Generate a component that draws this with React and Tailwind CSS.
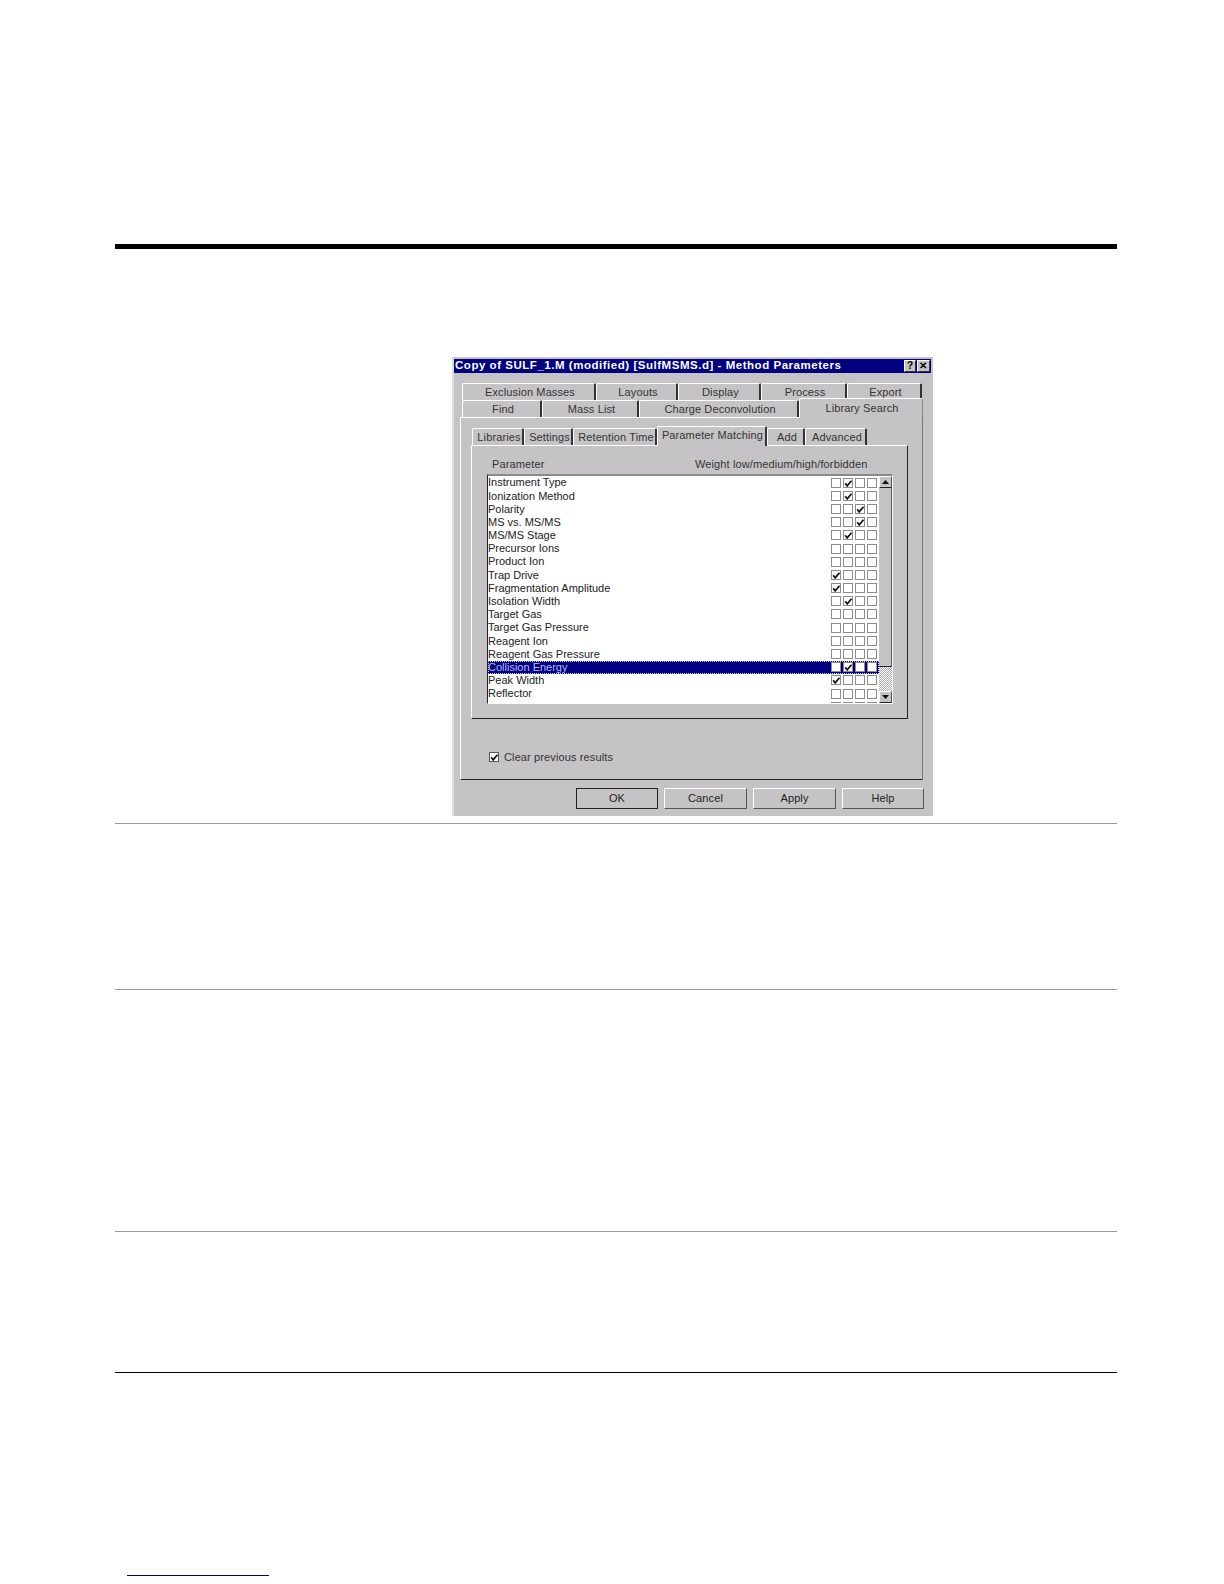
import React from 'react';

const backTabs = [
  ['Exclusion Masses', 'w-[134px]'],
  ['Layouts', 'w-[82px]'],
  ['Display', 'w-[83px]'],
  ['Process', 'w-[86px]'],
  ['Export', 'w-[75px]'],
];

const frontTabs = [
  ['Find', 'w-[80px]'],
  ['Mass List', 'w-[97px]'],
  ['Charge Deconvolution', 'w-[160px]'],
];

const innerTabs = [
  ['Libraries', 'w-[52px]'],
  ['Settings', 'w-[49px]'],
  ['Retention Time', 'w-[84px]'],
];

// checked = column with a tick, 0 means none
const params = [
  ['Instrument Type', 2],
  ['Ionization Method', 2],
  ['Polarity', 3],
  ['MS vs. MS/MS', 3],
  ['MS/MS Stage', 2],
  ['Precursor Ions', 0],
  ['Product Ion', 0],
  ['Trap Drive', 1],
  ['Fragmentation Amplitude', 1],
  ['Isolation Width', 2],
  ['Target Gas', 0],
  ['Target Gas Pressure', 0],
  ['Reagent Ion', 0],
  ['Reagent Gas Pressure', 0],
  ['Collision Energy', 2, true],
  ['Peak Width', 1],
  ['Reflector', 0],
  ['Dry Source Temp', 0],
];

const Tick = () => (
  <svg viewBox="0 0 9 9" className="w-[9px] h-[9px] block">
    <path d="M1.2 4.2 L3.2 6.8 L7.5 1.8" fill="none" stroke="#111" strokeWidth="1.7" />
  </svg>
);

const Box = ({ checked, className = '' }) => (
  <div className={`w-[10px] h-[10px] bg-white border border-[#8c8c8c] shrink-0 ${className}`}>
    {checked && <Tick />}
  </div>
);

const Row = ({ label, col, selected }) => (
  <div className={`flex items-center h-[13.2px] shrink-0 ${selected ? 'bg-[#000080] outline-1 outline-dotted outline-[#d0d0d0] -outline-offset-1' : ''}`}>
    <span className={`flex-1 whitespace-nowrap tracking-normal ${selected ? 'text-[#b9b9ff]' : 'text-[#222]'}`}>{label}</span>
    <div className="flex gap-[2.1px] pr-[2px]">
      {[1, 2, 3, 4].map((n) => (
        <Box key={n} checked={col === n} />
      ))}
    </div>
  </div>
);

const Tab = ({ label, width }) => (
  <div className={`${width} h-[17px] pl-[3px] pt-[1px] flex items-center justify-center bg-[#c6c3c6] border-t border-l border-t-white border-l-white border-r-2 border-r-[#333] rounded-t-[2px] whitespace-nowrap`}>
    {label}
  </div>
);

const Btn = ({ label, isDefault, className = '' }) => (
  <button className={`h-[21px] pb-[1px] text-[11px] text-[#222] bg-[#c6c3c6] border ${isDefault ? 'border-[#222]' : 'border-t-white border-l-white border-r-[#555] border-b-[#555]'} ${className}`}>
    {label}
  </button>
);

const ArrowBtn = ({ up }) => (
  <div className="h-[12px] shrink-0 flex items-center justify-center bg-[#c6c3c6] border border-t-white border-l-white border-r-[#555] border-b-[#222]">
    <svg viewBox="0 0 7 4" className="w-[7px] h-[4px]">
      <path d={up ? 'M3.5 0 L7 4 L0 4 Z' : 'M0 0 L7 0 L3.5 4 Z'} fill="#111" />
    </svg>
  </div>
);

const Dialog = () => (
  <div className="w-[481px] h-[459px] ml-[337px] mt-[108px] bg-[#c6c3c6] border-l-2 border-l-[#dcdcdc] pt-[2px] pr-[2px] text-[11px] text-[#333] font-['Liberation_Sans',Arial,sans-serif] tracking-[0.12px]">
    <div className="h-[14px] bg-[#000080] flex items-center justify-between pl-[1px] pr-[1px]">
      <span className="text-white text-[11.5px] font-bold tracking-[0.53px] whitespace-nowrap">
        Copy of SULF_1.M (modified) [SulfMSMS.d] - Method Parameters
      </span>
      <div className="flex gap-[1px]">
        <div className="w-[12px] h-[12px] bg-[#c6c3c6] border border-t-white border-l-white border-r-[#333] border-b-[#333] text-[10px] leading-[10px] font-bold text-center text-black">?</div>
        <div className="w-[13px] h-[12px] bg-[#c6c3c6] border border-t-white border-l-white border-r-[#333] border-b-[#333] text-[10px] leading-[10px] font-bold text-center text-black">✕</div>
      </div>
    </div>

    <div className="flex ml-[8px] mt-[10px]">
      {backTabs.map(([label, w]) => (
        <Tab key={label} label={label} width={w} />
      ))}
    </div>
    <div className="flex items-end ml-[8px] relative z-10">
      {frontTabs.map(([label, w]) => (
        <Tab key={label} label={label} width={w} />
      ))}
      <div className="w-[124px] h-[20px] -mt-[3px] -mb-[1px] pl-[2px] pb-[1px] flex items-center justify-center bg-[#c6c3c6] border-t border-l border-t-white border-l-white border-r border-r-[#888] rounded-t-[2px] whitespace-nowrap">
        Library Search
      </div>
    </div>

    <div className="w-[463px] h-[363px] ml-[6px] border border-t-white border-l-white border-r-[#777] border-b-[#222] pt-[8px] pl-[11px]">
      <div className="flex items-end relative z-10">
        {innerTabs.map(([label, w]) => (
          <Tab key={label} label={label} width={w} />
        ))}
        <div className="w-[110px] h-[20px] -mb-[1px] pl-[2px] pb-[3px] flex items-center justify-center bg-[#c6c3c6] border-t border-l border-t-white border-l-white border-r-2 border-r-[#333] rounded-t-[2px] whitespace-nowrap">
          Parameter Matching
        </div>
        <Tab label="Add" width="w-[38px]" />
        <Tab label="Advanced" width="w-[62px]" />
      </div>

      <div className="w-[437px] h-[274px] -ml-[1px] border border-t-white border-l-white border-r-[#222] border-b-[#222]">
        <div className="h-[28px] pt-[8px] flex items-center pl-[20px]">
          <span className="w-[203px]">Parameter</span>
          <span>Weight low/medium/high/forbidden</span>
        </div>
        <div className="w-[406px] h-[230px] ml-[15px] flex border-t-2 border-l border-t-[#8a8a8a] border-l-[#222] border-r border-b border-r-white border-b-white bg-white overflow-hidden">
          <div className="flex-1 flex flex-col overflow-hidden">
            {params.map(([label, col, selected]) => (
              <Row key={label} label={label} col={col} selected={selected} />
            ))}
          </div>
          <div className="w-[13px] flex flex-col">
            <ArrowBtn up />
            <div className="h-[179px] bg-[#c6c3c6] border-r border-b border-r-[#555] border-b-[#222]" />
            <div className="flex-1 bg-[repeating-conic-gradient(#a8a8a8_0_25%,#fff_0_50%)] bg-[length:2px_2px]" />
            <ArrowBtn />
          </div>
        </div>
      </div>

      <div className="flex items-center mt-[30px] ml-[17px] gap-[5px]">
        <Box checked className="border-[#555]" />
        <span>Clear previous results</span>
      </div>
    </div>

    <div className="flex mt-[8px] ml-[122px] gap-[6px]">
      <Btn label="OK" isDefault className="w-[82px]" />
      <Btn label="Cancel" className="w-[83px]" />
      <Btn label="Apply" className="w-[83px]" />
      <Btn label="Help" className="w-[82px]" />
    </div>
  </div>
);

export default function App() {
  return (
    <div className="w-[1224px] h-[1584px] bg-white pt-[244px] pl-[115px]">
      <div className="w-[1002px] h-[5px] bg-black" />
      <Dialog />
      <div className="w-[1002px] h-px mt-[7px] bg-[#999]" />
      <div className="w-[1002px] h-px mt-[165px] bg-[#999]" />
      <div className="w-[1002px] h-px mt-[241px] bg-[#999]" />
      <div className="w-[1002px] h-px mt-[140px] bg-black" />
      <div className="w-[142px] h-px ml-[12px] mt-[202px] bg-[#000080]" />
    </div>
  );
}
